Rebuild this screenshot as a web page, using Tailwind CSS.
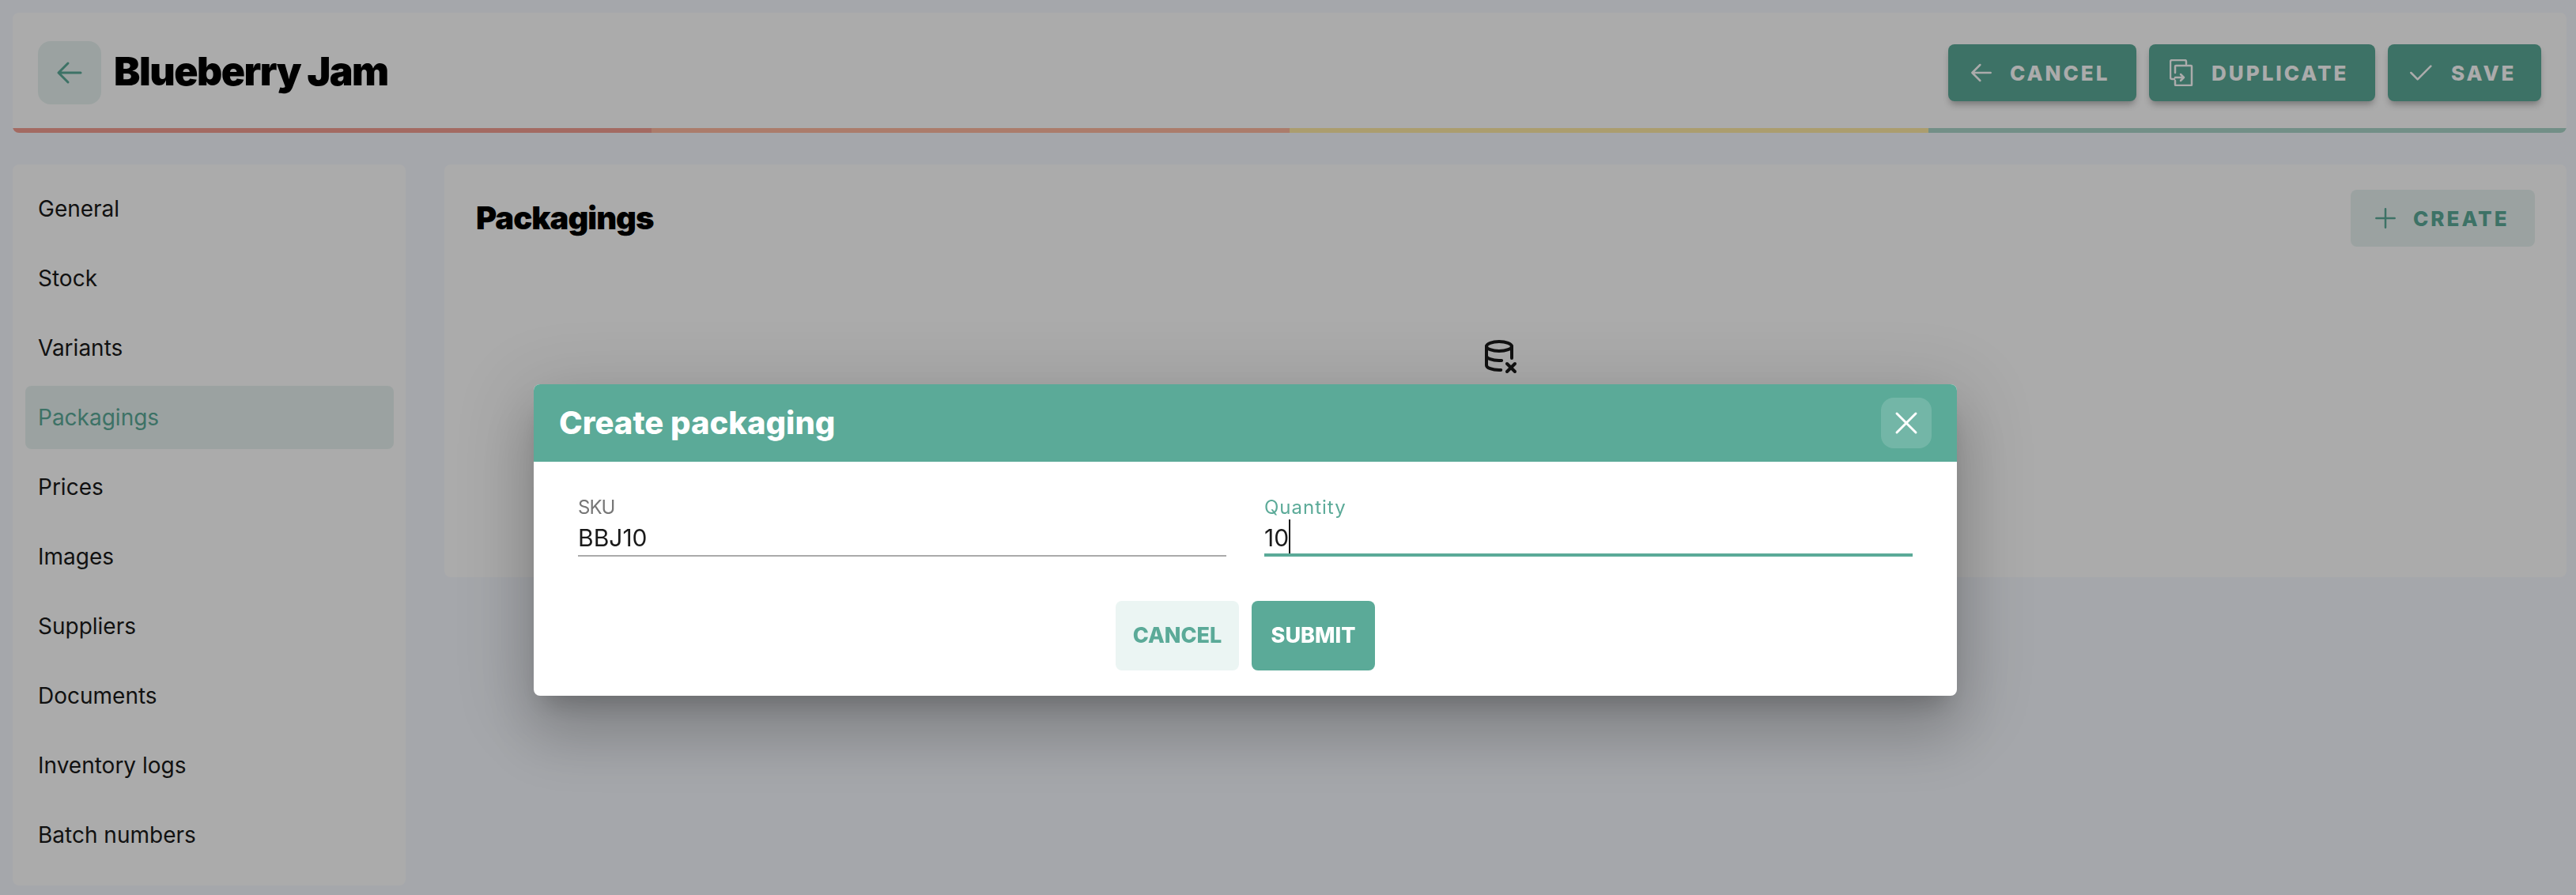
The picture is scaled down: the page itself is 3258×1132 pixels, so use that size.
<!DOCTYPE html>
<html lang="en">
<head>
    <meta charset="UTF-8">
    <meta name="viewport" content="width=device-width, initial-scale=1.0">
    <title>Blueberry Jam</title>
    <script src="https://cdn.jsdelivr.net/npm/@tailwindcss/browser@4"></script>
</head>
<body class="bg-[#f7f9ff] h-[1132px] overflow-hidden font-[Inter,sans-serif] text-[#1a1a1a]">

    <div class="pl-4 pr-3 py-4 flex flex-col gap-10">

        <!-- Header -->
        <header class="bg-white rounded-lg overflow-hidden h-[152px] flex flex-col">
            <div class="flex-1 flex items-center justify-between pl-8 pr-8 pt-[6px]">
                <div class="flex items-center gap-4">
                    <button class="w-20 h-20 rounded-2xl bg-[#5baa98]/15 text-[#5baa98] flex items-center justify-center">
                        <svg width="48" height="48" viewBox="0 0 24 24" fill="none" stroke="currentColor" stroke-width="1.5" stroke-linecap="round" stroke-linejoin="round"><path d="M5 12h14M5 12l6 6M5 12l6-6"/></svg>
                    </button>
                    <h1 class="-mt-1 text-[50px] leading-none font-black text-black tracking-[-1.5px]">Blueberry Jam</h1>
                </div>
                <div class="flex items-center gap-4">
                    <button class="w-[238px] h-[72px] pl-[22px] flex items-center gap-4 rounded-lg bg-[#5baa98] text-white text-[26px] font-extrabold tracking-[3px] shadow-[0_6px_8px_-2px_rgba(0,0,0,0.3)]">
                        <svg width="40" height="40" viewBox="0 0 24 24" fill="none" stroke="currentColor" stroke-width="1.5" stroke-linecap="round" stroke-linejoin="round"><path d="M5 12h14M5 12l6 6M5 12l6-6"/></svg>
                        CANCEL
                    </button>
                    <button class="w-[286px] h-[72px] pl-[26px] flex items-center gap-[23px] rounded-lg bg-[#5baa98] text-white text-[26px] font-extrabold tracking-[3px] shadow-[0_6px_8px_-2px_rgba(0,0,0,0.3)]">
                        <svg width="30" height="34" viewBox="0 0 30 34" fill="none" stroke="currentColor" stroke-width="2.5" stroke-linecap="round" stroke-linejoin="round"><path d="M21 6V3a2 2 0 0 0-2-2H3a2 2 0 0 0-2 2v20a2 2 0 0 0 2 2h3"/><path d="M7 17V9a1 1 0 0 1 1-1h19a1 1 0 0 1 1 1v23a1 1 0 0 1-1 1H8a1 1 0 0 1-1-1v-5"/><path d="M7 23h11M14 19l4 4-4 4"/></svg>
                        DUPLICATE
                    </button>
                    <button class="w-[194px] h-[72px] pl-[21px] flex items-center gap-[19px] rounded-lg bg-[#5baa98] text-white text-[26px] font-extrabold tracking-[3px] shadow-[0_6px_8px_-2px_rgba(0,0,0,0.3)]">
                        <svg width="40" height="40" viewBox="0 0 24 24" fill="none" stroke="currentColor" stroke-width="1.5" stroke-linecap="round" stroke-linejoin="round"><path d="M5 12l5 5L20 7"/></svg>
                        SAVE
                    </button>
                </div>
            </div>
            <!-- Progress strip -->
            <div class="grid grid-cols-4 h-[6px]">
                <div class="bg-[#f39f93]"></div>
                <div class="bg-[#ffb9a0]"></div>
                <div class="bg-[#ffeaa4]"></div>
                <div class="bg-[#abd6c9]"></div>
            </div>
        </header>

        <div class="flex items-start gap-[49px]">

            <!-- Sidebar -->
            <nav class="w-[497px] h-[912px] shrink-0 bg-white rounded-lg pl-4 pr-[15px] py-4 flex flex-col gap-2 text-[28px]">
                <a class="h-20 px-4 flex items-center rounded-lg">General</a>
                <a class="h-20 px-4 flex items-center rounded-lg">Stock</a>
                <a class="h-20 px-4 flex items-center rounded-lg">Variants</a>
                <a class="h-20 px-4 flex items-center rounded-lg bg-[#5baa98]/15 text-[#5baa98]">Packagings</a>
                <a class="h-20 px-4 flex items-center rounded-lg">Prices</a>
                <a class="h-20 px-4 flex items-center rounded-lg">Images</a>
                <a class="h-20 px-4 flex items-center rounded-lg">Suppliers</a>
                <a class="h-20 px-4 flex items-center rounded-lg">Documents</a>
                <a class="h-20 px-4 flex items-center rounded-lg">Inventory logs</a>
                <a class="h-20 px-4 flex items-center rounded-lg">Batch numbers</a>
            </nav>

            <!-- Packagings card -->
            <main class="flex-1 h-[522px] bg-white rounded-lg px-10 pt-8 flex flex-col">
                <div class="flex items-center justify-between h-[72px]">
                    <h2 class="text-[40px] leading-none font-black text-black tracking-[-1px]">Packagings</h2>
                    <button class="w-[233px] h-[72px] pl-6 flex items-center gap-[15px] rounded-lg bg-[#5baa98]/15 text-[#5baa98] text-[26px] font-extrabold tracking-[3px]">
                        <svg width="40" height="40" viewBox="0 0 24 24" fill="none" stroke="currentColor" stroke-width="1.5" stroke-linecap="round" stroke-linejoin="round"><path d="M12 5v14M5 12h14"/></svg>
                        CREATE
                    </button>
                </div>
                <div class="mt-[114px] mr-4 self-center">
                    <svg width="48" height="48" viewBox="0 0 24 24" fill="none" stroke="currentColor" stroke-width="2" stroke-linecap="round" stroke-linejoin="round"><path d="M4 6c0 1.657 3.582 3 8 3s8-1.343 8-3s-3.582-3-8-3s-8 1.343-8 3"/><path d="M4 6v6c0 1.657 3.582 3 8 3c.537 0 1.062-.02 1.57-.058"/><path d="M20 13.5V6"/><path d="M4 12v6c0 1.657 3.582 3 8 3c.384 0 .762-.01 1.132-.03"/><path d="M22 22l-5-5"/><path d="M17 22l5-5"/></svg>
                </div>
            </main>
        </div>
    </div>

    <!-- Backdrop -->
    <div class="fixed inset-0 bg-black/33"></div>

    <!-- Create packaging dialog -->
    <div class="absolute left-[675px] top-[486px] w-[1800px] bg-white rounded-lg overflow-hidden shadow-[0_22px_30px_-14px_rgba(0,0,0,0.2),0_48px_76px_6px_rgba(0,0,0,0.14),0_18px_92px_16px_rgba(0,0,0,0.12)]">
        <div class="h-[98px] bg-[#5baa98] pl-8 pr-8 flex items-center justify-between">
            <h3 class="text-[40px] leading-none font-extrabold text-white">Create packaging</h3>
            <button class="w-16 h-16 rounded-2xl bg-white/15 text-white flex items-center justify-center">
                <svg width="48" height="48" viewBox="0 0 24 24" fill="none" stroke="currentColor" stroke-width="1.5" stroke-linecap="round" stroke-linejoin="round"><path d="M18 6L6 18M6 6l12 12"/></svg>
            </button>
        </div>
        <div class="px-14 pt-10 pb-8">
            <div class="grid grid-cols-2 gap-12">
                <div>
                    <label class="block h-9 leading-9 text-[24px] text-[#777] tracking-[-1px]">SKU</label>
                    <div class="h-11 pb-1 border-b-2 border-[#aaa] text-[30px] leading-10">BBJ10</div>
                </div>
                <div>
                    <label class="block h-9 leading-9 text-[24px] text-[#5baa98] tracking-[1px]">Quantity</label>
                    <div class="h-11 border-b-4 border-[#5baa98] text-[30px] leading-10 flex items-start">10<span class="w-[2px] h-[43px] -mt-[3px] bg-[#1a1a1a]"></span></div>
                </div>
            </div>
            <div class="mt-14 flex justify-center gap-4">
                <button class="w-[156px] h-[88px] rounded-lg bg-[#ebf5f3] text-[#5baa98] text-[27px] font-extrabold">CANCEL</button>
                <button class="w-[156px] h-[88px] rounded-lg bg-[#5baa98] text-white text-[27px] font-extrabold">SUBMIT</button>
            </div>
        </div>
    </div>

</body>
</html>
